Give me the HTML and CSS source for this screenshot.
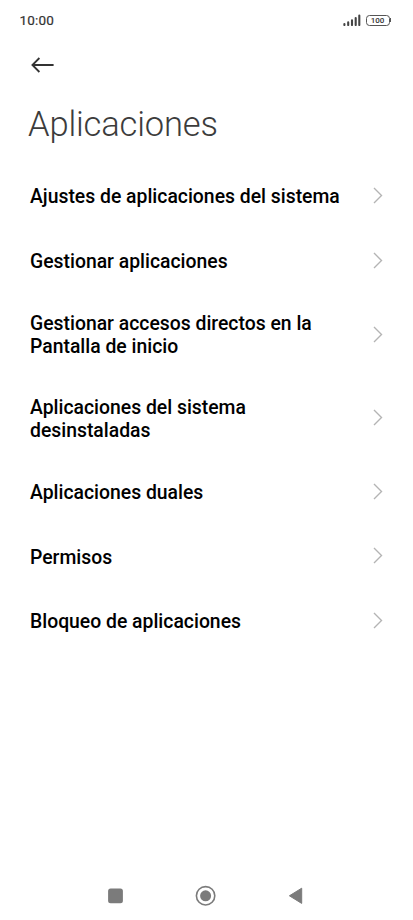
FILE: index.html
```html
<!DOCTYPE html>
<html lang="es">
<head>
<meta charset="utf-8">
<title>Aplicaciones</title>
<link rel="stylesheet" href="styles.css">
</head>
<body>
<div class="screen">
  <div class="status">
    <span class="time">10:00</span>
    <div class="indicators">
      <svg class="signal" width="18" height="12" viewBox="0 0 18 12"><path d="M1.4 11V10M5.2 11V8.4M9 11V6.2M12.7 11V4M16.3 11V1.5" stroke="#444" stroke-width="2.1" stroke-linecap="round"/></svg>
      <div class="battery"><span>100</span></div><i class="tip"></i>
    </div>
  </div>
  <header>
    <svg class="back" width="24" height="18" viewBox="0 0 24 18"><path d="M8.4 2L1.4 9l7 7M1.6 9H22.6" fill="none" stroke="#333" stroke-width="1.8"/></svg>
    <h1>Aplicaciones</h1>
  </header>
  <ul class="list">
    <li><span>Ajustes de aplicaciones del sistema</span><svg class="chev" viewBox="0 0 10 18"><path d="M1 1L8.5 8.5 1 16"/></svg></li>
    <li><span>Gestionar aplicaciones</span><svg class="chev" viewBox="0 0 10 18"><path d="M1 1L8.5 8.5 1 16"/></svg></li>
    <li class="double"><span>Gestionar accesos directos en la<br>Pantalla de inicio</span><svg class="chev" viewBox="0 0 10 18"><path d="M1 1L8.5 8.5 1 16"/></svg></li>
    <li class="double"><span>Aplicaciones del sistema<br>desinstaladas</span><svg class="chev" viewBox="0 0 10 18"><path d="M1 1L8.5 8.5 1 16"/></svg></li>
    <li><span>Aplicaciones duales</span><svg class="chev" viewBox="0 0 10 18"><path d="M1 1L8.5 8.5 1 16"/></svg></li>
    <li><span>Permisos</span><svg class="chev" viewBox="0 0 10 18"><path d="M1 1L8.5 8.5 1 16"/></svg></li>
    <li><span>Bloqueo de aplicaciones</span><svg class="chev" viewBox="0 0 10 18"><path d="M1 1L8.5 8.5 1 16"/></svg></li>
  </ul>
  <nav>
    <svg width="22" height="22" viewBox="0 0 22 22"><rect x="4.1" y="3.6" width="14.8" height="14.6" rx="2.5" fill="#7b7b7b"/></svg>
    <svg width="22" height="22" viewBox="0 0 22 22"><circle cx="10.6" cy="10.8" r="9.2" fill="none" stroke="#7b7b7b" stroke-width="1.6"/><circle cx="10.6" cy="10.8" r="5.5" fill="#7b7b7b"/></svg>
    <svg width="22" height="22" viewBox="0 0 22 22"><path d="M4.4 10.8L16.7 3.2v15.2z" fill="#7b7b7b" stroke="#7b7b7b" stroke-linejoin="round"/></svg>
  </nav>
</div>
</body>
</html>
```
FILE: styles.css
```css
* { box-sizing: border-box; }
body { margin: 0; background: #fff; font-family: Roboto, sans-serif; }
.screen { width: 413px; height: 920px; display: flex; flex-direction: column; overflow: hidden; }
.status { height: 40px; padding: 0 22px 0 19.5px; display: flex; align-items: center; justify-content: space-between; }
.time { font-size: 13.5px; font-weight: 400; letter-spacing: 0.15px; color: #333; -webkit-text-stroke: 0.2px #333; }
.indicators { display: flex; align-items: center; }
.signal { margin-right: 5px; }
.battery { width: 24px; height: 11px; border: 1.2px solid #555; border-radius: 3.5px; display: flex; align-items: center; justify-content: center; font-size: 8px; font-weight: 500; color: #333; }
.tip { width: 1.5px; height: 4px; background: #555; }
header { height: 124px; padding: 16px 30px 0 28px; }
.back { display: block; margin-left: 3px; }
h1 { margin: 28px 0 0; font-size: 34.5px; line-height: 44px; letter-spacing: -0.15px; font-weight: 300; color: #3c3c3c; }
.list { list-style: none; margin: 0; padding: 0 30px; flex: 1; }
.list li { height: 64.4px; display: flex; align-items: center; justify-content: space-between; font-size: 19.37px; line-height: 22.6px; font-weight: 500; color: #000; }
.list span { padding-top: 3px; }
.list .double { height: 83.5px; }
.chev { width: 10px; height: 18px; fill: none; stroke: #b4b4b4; stroke-width: 1.4; }
nav { height: 48px; padding: 0 106px 0 104px; display: flex; align-items: center; justify-content: space-between; }
```
